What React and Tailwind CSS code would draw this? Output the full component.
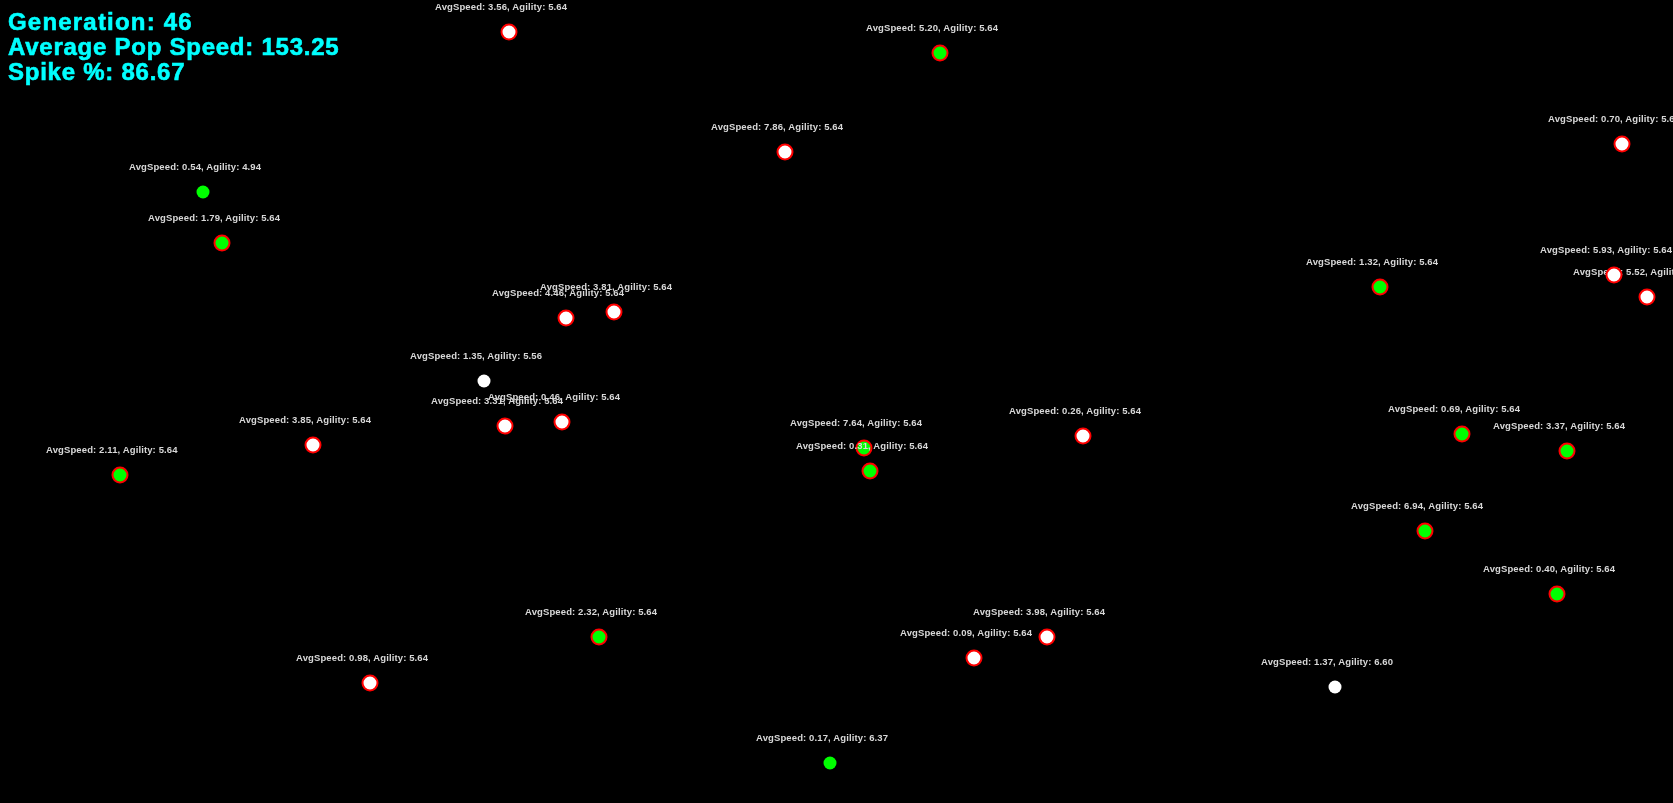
// Simulation frame: each agent is a dot with a stats label above it.
const AGENTS = [
  { x: 370, y: 683, speed: '0.98', agility: '5.64', fill: 'white', ring: true },
  { x: 1335, y: 687, speed: '1.37', agility: '6.60', fill: 'white', ring: false },
  { x: 509, y: 32, speed: '3.56', agility: '5.64', fill: 'white', ring: true },
  { x: 940, y: 53, speed: '5.20', agility: '5.64', fill: 'green', ring: true },
  { x: 785, y: 152, speed: '7.86', agility: '5.64', fill: 'white', ring: true },
  { x: 1622, y: 144, speed: '0.70', agility: '5.64', fill: 'white', ring: true },
  { x: 203, y: 192, speed: '0.54', agility: '4.94', fill: 'green', ring: false },
  { x: 222, y: 243, speed: '1.79', agility: '5.64', fill: 'green', ring: true },
  { x: 1380, y: 287, speed: '1.32', agility: '5.64', fill: 'green', ring: true },
  { x: 1647, y: 297, speed: '5.52', agility: '5.64', fill: 'white', ring: true },
  { x: 1614, y: 275, speed: '5.93', agility: '5.64', fill: 'white', ring: true },
  { x: 566, y: 318, speed: '4.46', agility: '5.64', fill: 'white', ring: true },
  { x: 614, y: 312, speed: '3.81', agility: '5.64', fill: 'white', ring: true },
  { x: 484, y: 381, speed: '1.35', agility: '5.56', fill: 'white', ring: false },
  { x: 505, y: 426, speed: '3.31', agility: '5.64', fill: 'white', ring: true },
  { x: 562, y: 422, speed: '0.46', agility: '5.64', fill: 'white', ring: true },
  { x: 313, y: 445, speed: '3.85', agility: '5.64', fill: 'white', ring: true },
  { x: 120, y: 475, speed: '2.11', agility: '5.64', fill: 'green', ring: true },
  { x: 864, y: 448, speed: '7.64', agility: '5.64', fill: 'green', ring: true },
  { x: 870, y: 471, speed: '0.31', agility: '5.64', fill: 'green', ring: true },
  { x: 1083, y: 436, speed: '0.26', agility: '5.64', fill: 'white', ring: true },
  { x: 1462, y: 434, speed: '0.69', agility: '5.64', fill: 'green', ring: true },
  { x: 1567, y: 451, speed: '3.37', agility: '5.64', fill: 'green', ring: true },
  { x: 1425, y: 531, speed: '6.94', agility: '5.64', fill: 'green', ring: true },
  { x: 1557, y: 594, speed: '0.40', agility: '5.64', fill: 'green', ring: true },
  { x: 599, y: 637, speed: '2.32', agility: '5.64', fill: 'green', ring: true },
  { x: 1047, y: 637, speed: '3.98', agility: '5.64', fill: 'white', ring: true },
  { x: 974, y: 658, speed: '0.09', agility: '5.64', fill: 'white', ring: true },
  { x: 830, y: 763, speed: '0.17', agility: '6.37', fill: 'green', ring: false },
]

function Agent({ x, y, speed, agility, fill, ring }) {
  return (
    <>
      <div
        className={`absolute rounded-full -translate-x-1/2 -translate-y-1/2 ${ring ? 'w-[17px] h-[17px] border-[2.5px] border-[#ff0000]' : 'w-[13px] h-[13px]'} ${fill === 'green' ? 'bg-[#00ff00]' : 'bg-white'}`}
        style={{ left: x, top: y }}
      />
      <span
        className="absolute whitespace-nowrap text-[9.5px] leading-[12px] font-bold tracking-[0.12px] text-[#d8d8d8] blur-[0.3px]"
        style={{ left: x - 74, top: y - 31 }}
      >
        AvgSpeed: {speed}, Agility: {agility}
      </span>
    </>
  )
}

export default function App() {
  return (
    <div className="relative w-full h-screen overflow-hidden bg-black font-['Liberation_Sans',Arial,sans-serif]">
      {AGENTS.map((a) => (
        <Agent key={a.speed + a.x} {...a} />
      ))}
      <div className="absolute left-2 top-[9px] text-[24px] leading-[25px] font-bold tracking-[0.75px] text-[#00ffff] [-webkit-text-stroke:0.6px_#00ffff] blur-[0.3px]">
        <div className="tracking-[1.2px]">Generation: 46</div>
        <div>Average Pop Speed: 153.25</div>
        <div>Spike %: 86.67</div>
      </div>
    </div>
  )
}
